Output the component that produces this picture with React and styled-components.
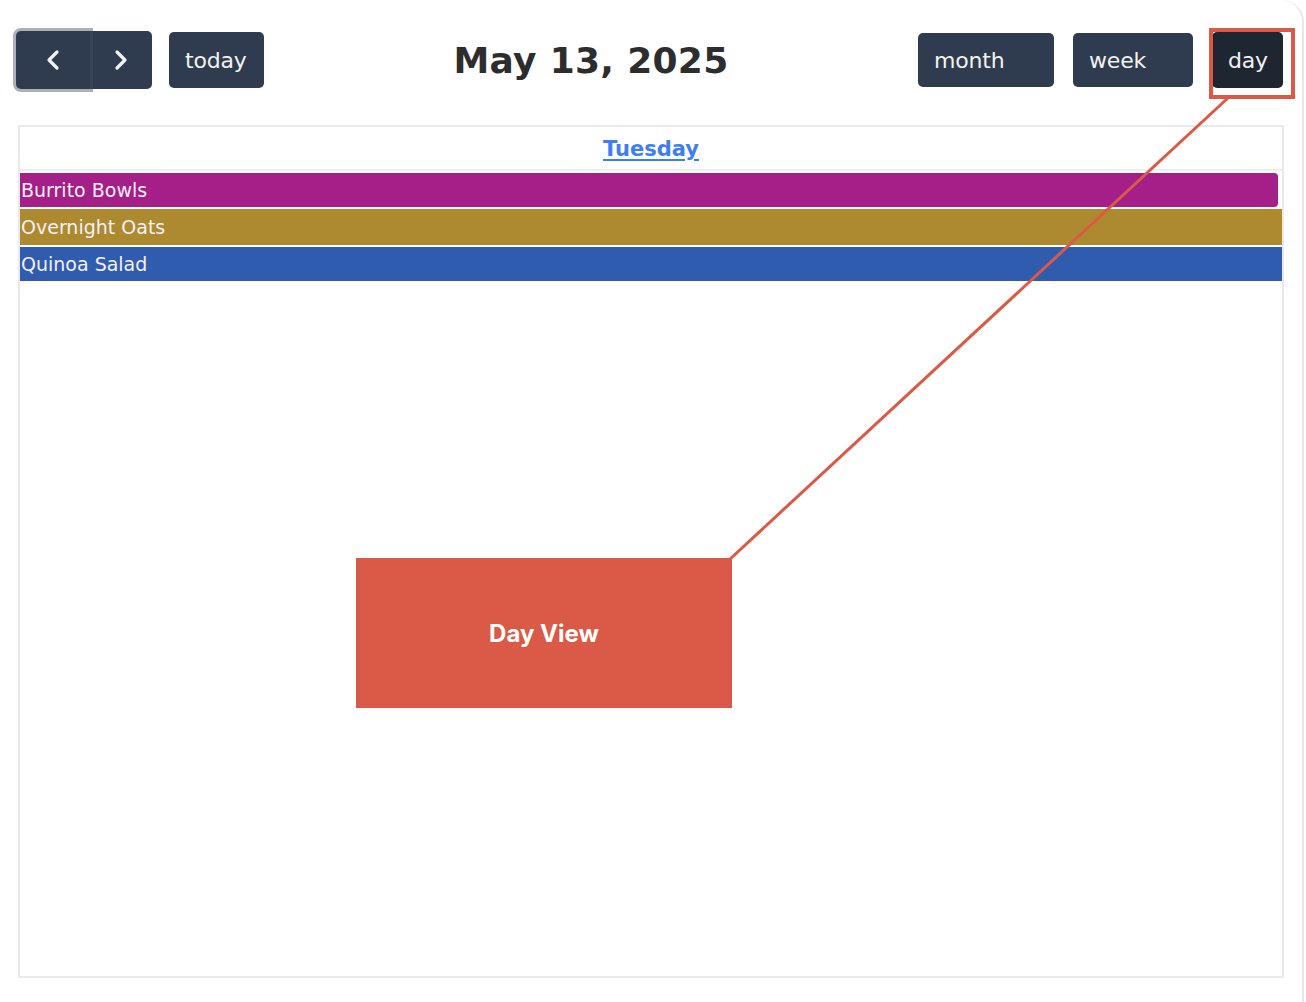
import React from 'react'
import styled, { createGlobalStyle } from 'styled-components'

const GlobalStyle = createGlobalStyle`
  html, body { margin: 0; padding: 0; background: #ffffff; }
  body { font-family: "DejaVu Sans", Verdana, sans-serif; }
`

const Frame = styled.div`
  position: relative;
  width: 1304px;
  height: 1002px;
  box-sizing: border-box;
  border-right: 2px solid #e4e8e8;
  border-top-right-radius: 22px;
  overflow: hidden;
`

const Toolbar = styled.div`
  display: flex;
  align-items: center;
  justify-content: space-between;
  padding: 31px 19px 0 16px;
  height: 58px;
`

const Group = styled.div`
  display: flex;
  align-items: center;
  gap: ${(p) => p.gap || 0}px;
`

const Button = styled.button`
  display: flex;
  align-items: center;
  justify-content: ${(p) => (p.icon ? 'center' : 'flex-start')};
  box-sizing: border-box;
  height: ${(p) => p.h || 56}px;
  width: ${(p) => p.w}px;
  padding: 0 0 0 ${(p) => (p.icon ? 0 : 16)}px;
  border: none;
  border-radius: ${(p) => p.radius || '5px'};
  background: ${(p) => (p.active ? '#1e2631' : '#2f3b4e')};
  color: #f2f2f2;
  font-family: "DejaVu Sans", Verdana, sans-serif;
  font-size: 22px;
  letter-spacing: -0.2px;
  box-shadow: ${(p) => (p.focus ? '0 0 0 3px rgba(70, 80, 95, 0.45)' : 'none')};
  position: relative;
  z-index: ${(p) => (p.focus ? 1 : 0)};
`

const Title = styled.h2`
  margin: 0;
  font-family: "DejaVu Sans", Verdana, sans-serif;
  font-weight: 700;
  font-size: 36px;
  color: #2d2d2d;
  letter-spacing: 0.3px;
`

const Calendar = styled.div`
  margin: 36px 0 0 18px;
  width: 1266px;
  height: 853px;
  box-sizing: border-box;
  border: 2px solid #eaeaea;
  display: flex;
  flex-direction: column;
`

const DayHeader = styled.div`
  height: 42px;
  border-bottom: 2px solid #eeeeee;
  display: flex;
  align-items: center;
  justify-content: center;
`

const DayLink = styled.a`
  font-family: "DejaVu Sans", Verdana, sans-serif;
  font-weight: 700;
  font-size: 21px;
  color: #3d7ef4;
  text-decoration: underline;
  text-underline-offset: 3px;
  margin-top: 2px;
`

const Events = styled.div`
  display: flex;
  flex-direction: column;
  gap: 2px;
  padding-top: 2px;
`

const Event = styled.div`
  height: ${(p) => p.h}px;
  box-sizing: border-box;
  margin-right: ${(p) => p.mr || 0}px;
  border-radius: ${(p) => p.radius || '0'};
  background: ${(p) => p.color};
  color: #f4f0f4;
  font-family: "DejaVu Sans", Verdana, sans-serif;
  font-size: 19px;
  letter-spacing: 0;
  padding-left: 1px;
  display: flex;
  align-items: center;
`

const Callout = styled.div`
  position: absolute;
  left: 356px;
  top: 558px;
  width: 376px;
  height: 150px;
  background: #da5a47;
  color: #ffffff;
  display: flex;
  align-items: center;
  justify-content: center;
  font-family: Inter, "Noto Sans", sans-serif;
  font-weight: 700;
  font-size: 24px;
`

const Highlight = styled.div`
  position: absolute;
  left: 1209px;
  top: 28px;
  width: 86px;
  height: 71px;
  box-sizing: border-box;
  border: 4px solid #da5a47;
`

const Leader = styled.svg`
  position: absolute;
  left: 0;
  top: 0;
  pointer-events: none;
`

const Chevron = ({ dir }) => (
  <svg width="14" height="22" viewBox="0 0 14 22">
    <path
      d={dir === 'left' ? 'M11 3 L3 11 L11 19' : 'M3 3 L11 11 L3 19'}
      fill="none"
      stroke="#f2f2f2"
      strokeWidth="3.2"
      strokeLinecap="round"
      strokeLinejoin="round"
    />
  </svg>
)

const events = [
  { title: 'Burrito Bowls', color: '#a41f88', h: 34, mr: 4, radius: '0 4px 4px 0' },
  { title: 'Overnight Oats', color: '#ad8a2f', h: 36 },
  { title: 'Quinoa Salad', color: '#2f5caf', h: 34 },
]

const App = () => {
  return (
    <Frame>
      <GlobalStyle />
      <Toolbar>
        <Group gap={17}>
          <Group>
            <Button icon w={74} h={58} focus radius="5px 0 0 5px">
              <Chevron dir="left" />
            </Button>
            <Button icon w={62} h={58} radius="0 5px 5px 0">
              <Chevron dir="right" />
            </Button>
          </Group>
          <Button w={95}>today</Button>
        </Group>
        <Title>May 13, 2025</Title>
        <Group gap={19}>
          <Button w={136} h={54}>month</Button>
          <Button w={120} h={54}>week</Button>
          <Button w={71} active>day</Button>
        </Group>
      </Toolbar>
      <Calendar>
        <DayHeader>
          <DayLink>Tuesday</DayLink>
        </DayHeader>
        <Events>
          {events.map((e) => (
            <Event key={e.title} color={e.color} h={e.h} mr={e.mr} radius={e.radius}>
              {e.title}
            </Event>
          ))}
        </Events>
      </Calendar>
      <Leader width="1306" height="1002">
        <line x1="1229" y1="97" x2="729" y2="560" stroke="#da5a47" strokeWidth="3" />
      </Leader>
      <Highlight />
      <Callout>Day View</Callout>
    </Frame>
  )
}

export default App
